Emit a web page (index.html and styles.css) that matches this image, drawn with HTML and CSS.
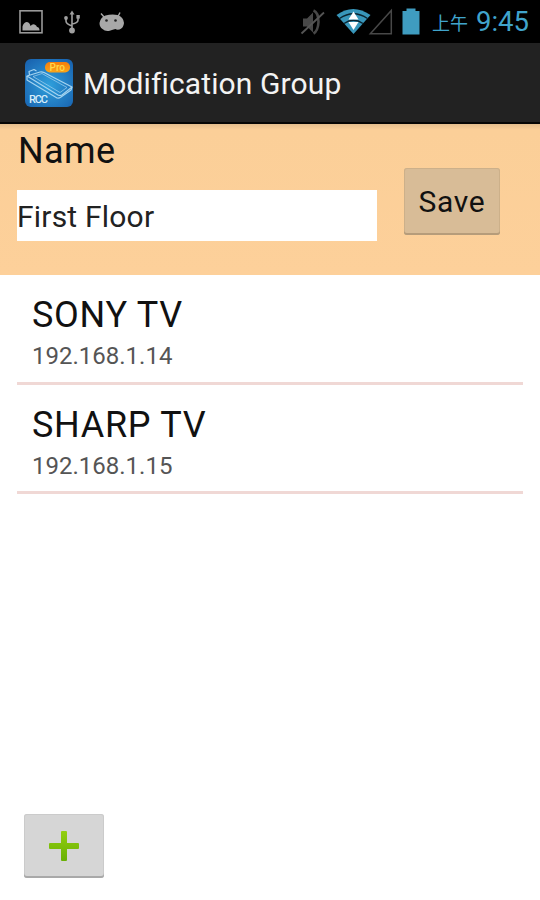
FILE: index.html
```html
<!DOCTYPE html>
<html lang="en">
<head>
  <meta charset="UTF-8">
  <meta name="viewport" content="width=device-width, initial-scale=1.0">
  <title>Modification Group</title>
  <link rel="stylesheet" href="styles.css">
</head>
<body>
  <div id="wrap">
    <!-- status bar -->
    <div id="status">
      <svg class="notices" width="120" height="42" viewBox="0 0 120 42">
        <rect x="20" y="10.8" width="22" height="22" fill="none" stroke="#999" stroke-width="1.6"/>
        <path d="M22.500 30.500v-4q1-4 4-4.500 3 0 4 4 2-2.500 4-1.500 2 .5 2.500 2.500 2.500 0 2.500 3.500z" fill="#a8a8a8"/>
        <g fill="none" stroke="#a0a0a0" stroke-width="1.600">
          <path d="M72 13v17M66 18v3q0 3 6 5M78 17v3q0 3-6 4"/>
        </g>
        <g fill="#a0a0a0">
          <path d="M72 10.500l2.500 4h-5z"/>
          <circle cx="66" cy="18" r="1.900"/>
          <rect x="76.400" y="15" width="3.400" height="3.600"/>
          <circle cx="72" cy="30.500" r="2.900"/>
        </g>
        <path d="M99.500 23q1-6 6-7.500 6-1.500 12-.5 6 2 6.500 8-.5 5-4.500 6.500-3 .5-4-.500-3 .5-5 1.500-5 1.500-8-1.500-3-2-3-6z" fill="#a8a8a8"/>
        <path d="M101 13.500l3.500 4M120 12.500l-2 4" stroke="#a8a8a8" stroke-width="1.400"/>
        <circle cx="106.500" cy="20.500" r="1.300" fill="#222"/>
        <circle cx="115.500" cy="20.500" r="1.300" fill="#222"/>
      </svg>
      <svg class="signals" width="124" height="42" viewBox="298 0 124 42">
        <path d="M303 18.500h4l6-6v20l-6-6h-4z" fill="#484848"/>
        <path d="M313.500 10.500q5 2 5 11.500-.500 9-5 11.500" fill="none" stroke="#484848" stroke-width="2.600"/>
        <path d="M301.500 33.500L324 12.500" stroke="#555" stroke-width="1.800"/>
        <path d="M336.500 15q16.500-12 34 0L353.500 34z" fill="#3896ba"/>
        <path d="M339.500 18.500q14-9.500 28 0M344 23.500q9.500-6.500 19 0" fill="none" stroke="#0a2430" stroke-width="1.500"/>
        <path d="M353.500 11.500l5 8h-10zM348.500 22h10l-5 8z" fill="#fff"/>
        <path d="M391.300 10.500v23.300h-21z" fill="none" stroke="#484848" stroke-width="1.500"/>
        <path d="M402.500 11h4V8.500h9V11h4v23.500h-17z" fill="#3f9cc0"/>
      </svg>
      <span class="ampm">上午</span>
      <span class="clock">9:45</span>
    </div>

    <!-- action bar -->
    <div id="action-bar">
      <svg class="logo" width="48" height="48" viewBox="0 0 48 48">
        <defs>
          <radialGradient id="logo-blue" cx=".5" cy=".55" r=".65">
            <stop offset="0" stop-color="#2fa0dc"/>
            <stop offset="1" stop-color="#1a66b2"/>
          </radialGradient>
          <linearGradient id="logo-orange" x1="0" y1="0" x2="0" y2="1">
            <stop offset="0" stop-color="#f47c0c"/>
            <stop offset="1" stop-color="#f9a51a"/>
          </linearGradient>
        </defs>
        <rect width="48" height="48" rx="6" fill="url(#logo-blue)"/>
        <g fill="none" stroke="#a5d4f0" stroke-width="1.200" stroke-linejoin="round">
          <path d="M2 17l13-4q2-.5 4 .5l28 14.500-10 8q-2 1-4 0z"/>
          <path d="M2 17v4l30 18q2 .5 4-1l10-7 1-3"/>
          <path d="M8 17.500l9-3 25 14-7 5z" stroke-width=".700"/>
          <path d="M4.500 16l-.5-3.500 5-2 2.500 1.500"/>
        </g>
        <rect x="20" y="3" width="25" height="10.500" rx="5" fill="url(#logo-orange)"/>
        <text class="logo-pro" x="24.500" y="11.700">Pro</text>
        <text class="logo-name" x="4" y="44" textLength="19">RCC</text>
      </svg>
      <h1>Modification Group</h1>
    </div>

    <!-- group name -->
    <div id="group">
      <div class="field">
        <label for="name">Name</label>
        <input type="text" id="name" value="First Floor">
      </div>
      <button class="btn save">Save</button>
    </div>

    <!-- devices -->
    <ul id="devices">
      <li>
        <div class="device">SONY TV</div>
        <div class="ip">192.168.1.14</div>
      </li>
      <li>
        <div class="device">SHARP TV</div>
        <div class="ip">192.168.1.15</div>
      </li>
    </ul>

    <button class="btn add" aria-label="Add">
      <svg width="30" height="30" viewBox="0 0 30 30">
        <defs>
          <linearGradient id="plus" x1="0" y1="0" x2="0" y2="1">
            <stop offset="0" stop-color="#93cf10"/>
            <stop offset="1" stop-color="#69b005"/>
          </linearGradient>
        </defs>
        <path d="M13 0h4q1 0 1 1v11h11q1 0 1 1v4q0 1-1 1H18v11q0 1-1 1h-4q-1 0-1-1V18H1q-1 0-1-1v-4q0-1 1-1h11V1q0-1 1-1z" fill="url(#plus)"/>
      </svg>
    </button>
  </div>
</body>
</html>
```
FILE: styles.css
```css
*{
  box-sizing: border-box;
}
body{
  margin: 0;
  background: #fff;
  font-family: Roboto, "Noto Sans CJK SC", sans-serif;
  color: #111;
}
#wrap{
  display: flex;
  flex-direction: column;
  width: 540px;
  height: 900px;
}
#status{
  display: flex;
  height: 43px;
  padding-right: 11px;
  background: #000;
  color: #40a4cc;
}
.notices{
  overflow: visible;
}
.signals{
  margin-left: auto;
}
.ampm{
  margin-left: 10px;
  width: 36px;
  font-size: 18px;
  line-height: 47px;
  white-space: nowrap;
}
.clock{
  margin-left: 8px;
  font-size: 27.5px;
  line-height: 44px;
}
#action-bar{
  display: flex;
  align-items: center;
  height: 81px;
  padding: 0 25px;
  background: #222;
  border-bottom: 2px solid #050505;
}
h1{
  margin: 2px 0 0 10px;
  font-size: 30px;
  font-weight: 400;
  line-height: 40px;
  letter-spacing: 0.12px;
  color: #f3f3f3;
}
.logo-pro{
  font-size: 10px;
  font-weight: 500;
  fill: #ffd94a;
}
.logo-name{
  font-size: 11px;
  font-weight: 500;
  fill: #d8eefa;
}
#group{
  display: flex;
  align-items: flex-start;
  height: 151px;
  padding: 4px 18px 0 17px;
  background: linear-gradient(#e3bd8d, #fbcf98 6px, #fdd09a);
}
.field{
  display: flex;
  flex-direction: column;
  width: 360px;
}
label{
  height: 62px;
  padding-left: 1px;
  font-size: 36px;
  line-height: 46px;
  letter-spacing: 0.4px;
}
input{
  width: 360px;
  height: 51px;
  padding: 2px 0 0;
  border: none;
  background: #fff;
  font-family: inherit;
  font-size: 30px;
  letter-spacing: 0.2px;
  color: #222;
}
.btn{
  padding: 0;
  border: none;
  border-radius: 3px;
  font-family: inherit;
}
.save{
  width: 96px;
  height: 67px;
  margin: 40px 0 0 27px;
  background: #d8bc97;
  box-shadow: inset 0 -2px 0 #b69c7a, inset 0 0 0 1px #ccb08a;
  font-size: 30px;
  letter-spacing: 0.7px;
  color: #111;
}
#devices{
  margin: 0;
  padding: 0 17px;
  list-style: none;
}
#devices li{
  height: 109.5px;
  padding: 17px 0 0 15px;
  border-bottom: 3px solid #f0d8d5;
}
.device{
  font-size: 36px;
  line-height: 46px;
  letter-spacing: 0.7px;
}
.ip{
  padding-top: 1px;
  font-size: 24px;
  line-height: 34px;
  color: #555;
}
.add{
  display: flex;
  align-items: center;
  justify-content: center;
  width: 80px;
  height: 64px;
  margin: auto 0 22px 24px;
  background: #d6d6d6;
  box-shadow: inset 0 -2px 0 #a9a9a9, inset 0 0 0 1px #cbcbcb;
}
```
